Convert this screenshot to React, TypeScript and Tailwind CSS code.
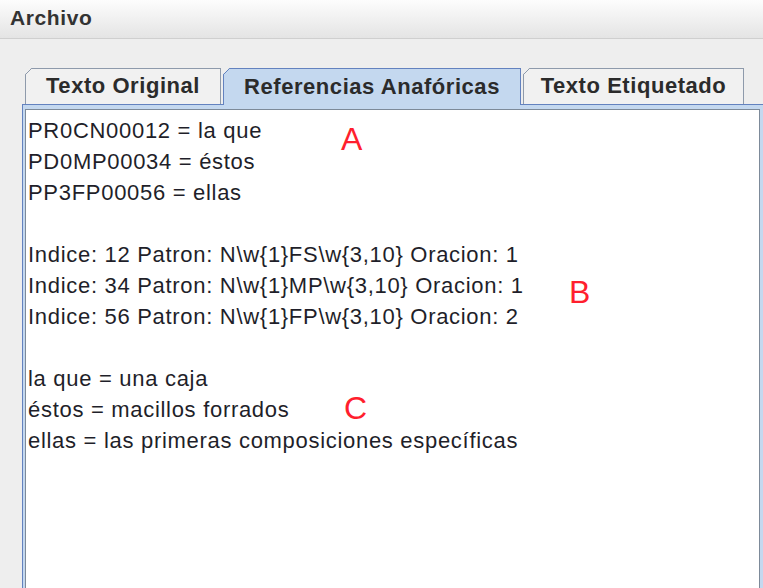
const lines = [
  "PR0CN00012 = la que",
  "PD0MP00034 = éstos",
  "PP3FP00056 = ellas",
  "",
  "Indice: 12 Patron: N\\w{1}FS\\w{3,10} Oracion: 1",
  "Indice: 34 Patron: N\\w{1}MP\\w{3,10} Oracion: 1",
  "Indice: 56 Patron: N\\w{1}FP\\w{3,10} Oracion: 2",
  "",
  "la que = una caja",
  "éstos = macillos forrados",
  "ellas = las primeras composiciones específicas",
];

function Corner({ color, fill }: { color: string; fill: string }) {
  // little chamfer on the top-left of each tab
  return (
    <svg className="absolute -left-px -top-px" width="7" height="7" viewBox="0 0 7 7">
      <polygon points="0,0 6.5,0 0,6.5" fill={fill} />
      <line x1="0.5" y1="6.5" x2="6.5" y2="0.5" stroke={color} strokeWidth="1" />
    </svg>
  );
}

function Tab({ label, width, selected }: { label: string; width: string; selected?: boolean }) {
  if (selected) {
    return (
      <div
        className={`relative z-10 -mb-px flex h-[37px] items-center justify-center border border-b-0 border-[#6382bf] bg-[#c4d8ef] pb-[2px] text-[22px] font-bold text-[#2b2b2b] ${width}`}
      >
        <Corner color="#6382bf" fill="#eeeeee" />
        <span className="tracking-[0.55px]">{label}</span>
      </div>
    );
  }
  return (
    <div
      className={`relative flex h-[36px] items-center justify-center border border-b-0 border-[#8e9aab] bg-[#f1f1f1] pb-[2px] text-[22px] font-bold text-[#2b2b2b] ${width}`}
    >
      <Corner color="#8e9aab" fill="#eeeeee" />
      <span className="tracking-[0.55px]">{label}</span>
    </div>
  );
}

export default function App() {
  return (
    <div
      className="relative h-[588px] w-[763px] overflow-hidden bg-[#eeeeee]"
      style={{ fontFamily: '"Liberation Sans", Arial, sans-serif' }}
    >
      <div className="flex h-[39px] items-center border-b border-[#cfcfcf] bg-gradient-to-b from-[#fdfdfd] to-[#e4e4e4] pl-[10px] pb-[2px]">
        <span className="text-[21px] font-bold tracking-[0.6px] text-[#333333]">Archivo</span>
      </div>

      <div className="ml-[22px] mt-[29px] flex flex-col">
        <div className="flex items-end gap-[2px] pl-[3px]">
          <Tab label="Texto Original" width="w-[196px]" />
          <Tab label="Referencias Anafóricas" width="w-[298px]" selected />
          <Tab label="Texto Etiquetado" width="w-[221px]" />
        </div>
        <div className="flex h-[490px] flex-col border-l border-t border-[#6382bf] bg-[#c4d8ef] pl-[2px] pt-[4px] pr-[3px]">
          <div className="flex-1 border border-[#7d8a99] bg-white pl-[2px] pt-[5px] text-[22px] leading-[31px] tracking-[0.7px] text-[#1f1f2a]">
            {lines.map((l, i) => (
              <div key={i} className="h-[31px] whitespace-pre">
                {l}
              </div>
            ))}
          </div>
        </div>
      </div>

      <span className="absolute left-[341px] top-[123px] text-[32px] leading-none text-[#ff1f2e]">A</span>
      <span className="absolute left-[569px] top-[276px] text-[32px] leading-none text-[#ff1f2e]">B</span>
      <span className="absolute left-[344px] top-[392px] text-[32px] leading-none text-[#ff1f2e]">C</span>
    </div>
  );
}
